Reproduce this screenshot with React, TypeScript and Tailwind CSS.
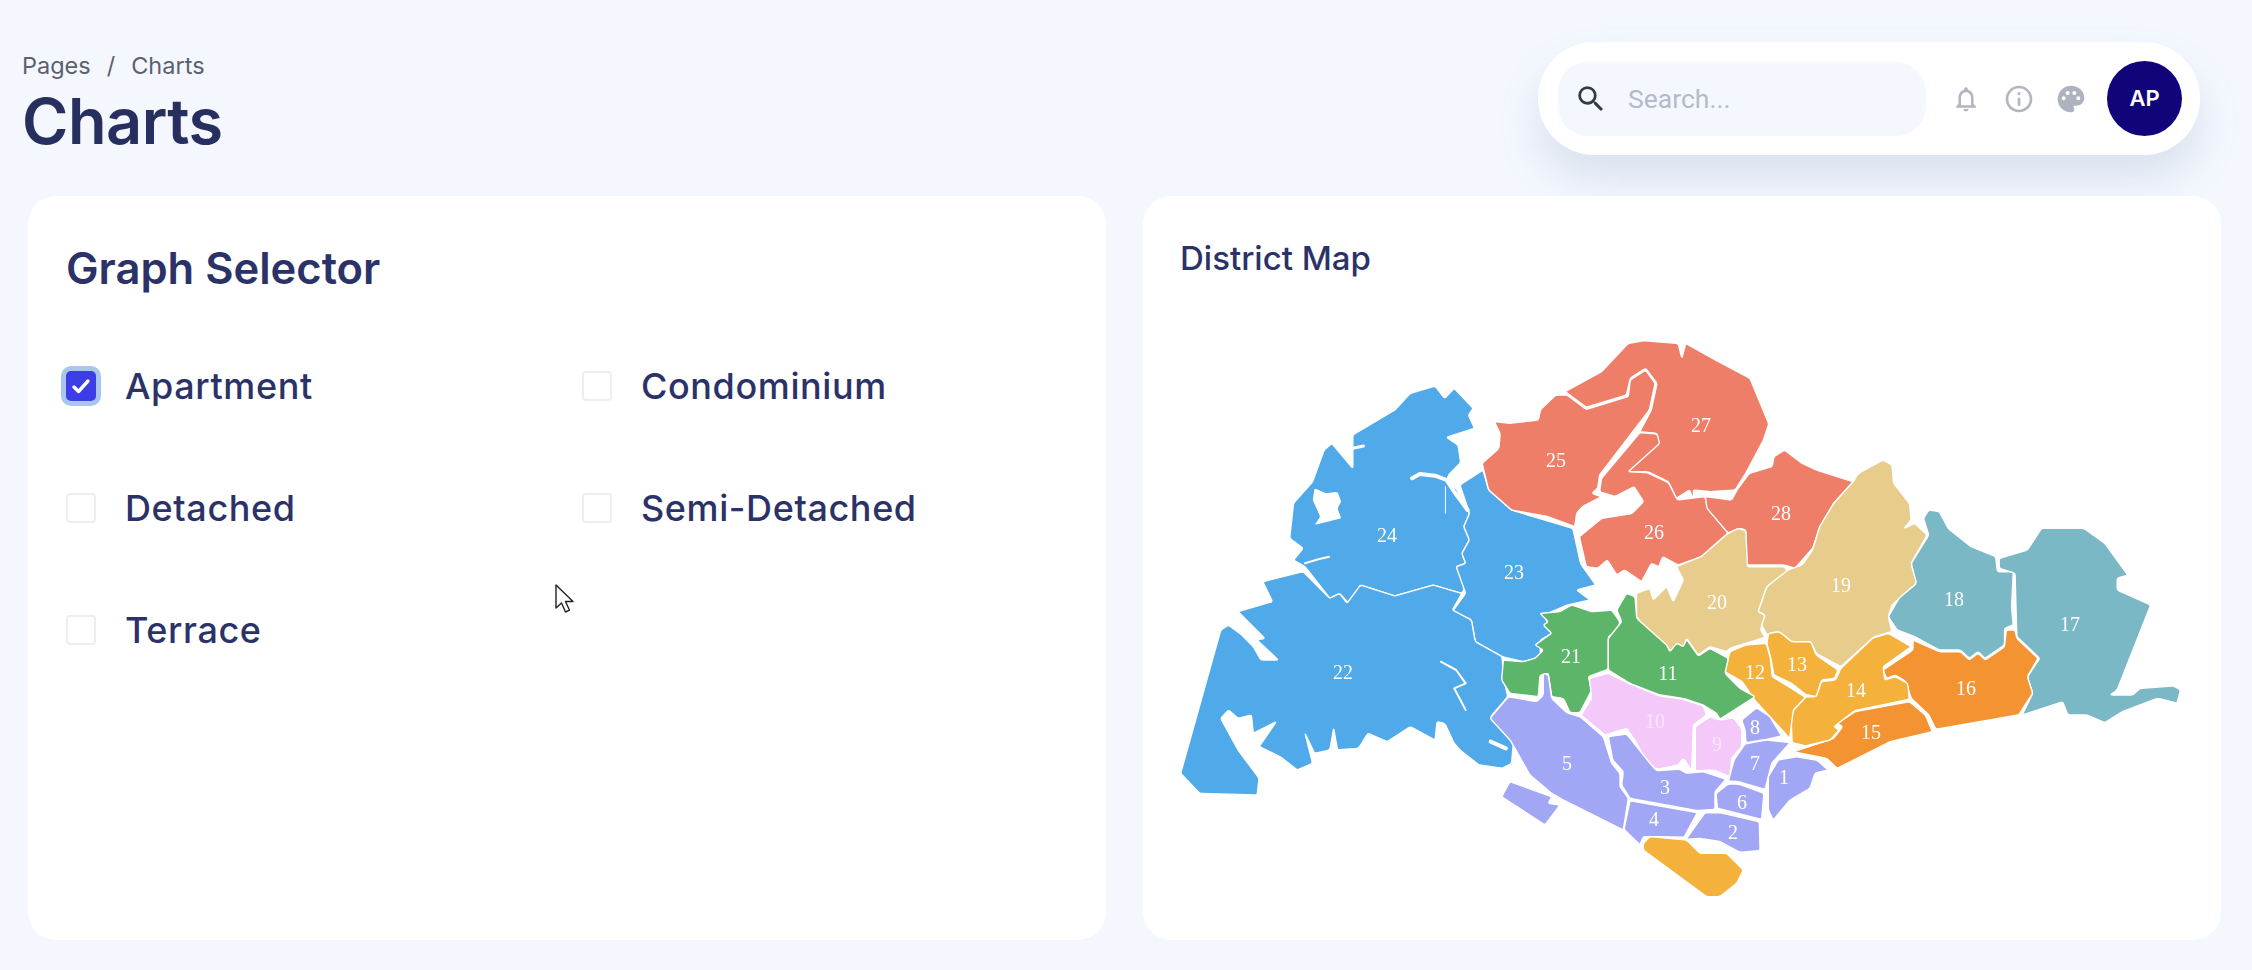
import React from "react";
import { MdSearch, MdNotificationsNone, MdInfoOutline, MdPalette } from "react-icons/md";

type Fn = (x: number, y: number) => [number, number];
const z1: Fn = (x, y) => [1150 + (x * 600) / 1568, 300 + y / 3];
const z3: Fn = (x, y) => [1150 + (x * 600) / 1568, 600 + y / 3];
const z2: Fn = (x, y) => [1700 + (x * 552) / 1568, 440 + y / 3];
const z7: Fn = (x, y) => [1480 + x / 3, 580 + y / 3];

const rounded = (f: Fn, s: string, r = 2) => {
  const n = s.trim().split(/\s+/).map((p) => {
    const [a, b] = p.split(",").map(Number);
    return f(a, b);
  });
  let d = "";
  n.forEach((v, i) => {
    const p = n[(i - 1 + n.length) % n.length];
    const q = n[(i + 1) % n.length];
    const lerp = (o: [number, number]) => {
      const dist = Math.hypot(o[0] - v[0], o[1] - v[1]) || 1;
      const t = Math.min(r / dist, 0.5);
      return [v[0] + (o[0] - v[0]) * t, v[1] + (o[1] - v[1]) * t];
    };
    const a = lerp(p);
    const b = lerp(q);
    d += `${i ? "L" : "M"}${a[0].toFixed(1)} ${a[1].toFixed(1)}Q${v[0].toFixed(1)} ${v[1].toFixed(1)} ${b[0].toFixed(1)} ${b[1].toFixed(1)}`;
  });
  return d + "Z";
};
const line = (f: Fn, s: string) =>
  "M" + s.trim().split(/\s+/).map((p) => {
    const [a, b] = p.split(",").map(Number);
    return f(a, b).map((v) => v.toFixed(1)).join(" ");
  }).join("L");

const BLUE = "#50a9e9", RED = "#ef7e69", TAN = "#e7cc8c", TEAL = "#79b8c4", ORANGE = "#f39331", AMBER = "#f4b13b", GREEN = "#5cb568", PINK = "#f4c8f8", PURPLE = "#a2a7f5";

const regions: [string, Fn, string][] = [
  [BLUE, z1, "745,258 770,295 795,265 845,325 832,345 848,385 775,412 805,435 812,488 780,525 775,545 800,565 835,640 820,680 835,720 815,760 825,790 800,800 830,850 815,880 740,855 640,888 550,855 520,910 495,880 470,895 405,800 375,780 400,745 365,715 375,610 425,545 455,450 475,430 530,505 530,405 640,330 680,280"],
  [BLUE, z1, "870,510 885,570 945,630 1105,685 1125,790 1165,855 1115,870 1150,900 1090,915 1030,945 1050,1000 1020,1020 1020,1070 975,1085 920,1070 850,1025 840,960 790,935 825,880 800,800 825,790 815,760 835,720 820,680 835,640 810,555"],
  [BLUE, z3, "230,35 320,5 295,-55 400,-85 470,-5 495,-20 515,10 550,-45 640,-12 740,-45 815,-20 790,30 840,60 850,125 920,170 925,240 935,290 890,350 950,420 945,490 920,505 860,495 810,450 795,430 770,370 750,365 745,420 680,380 620,425 570,400 545,445 490,450 480,385 470,450 430,460 405,400 425,490 385,510 340,470 285,440 330,365 270,400 265,345 230,355 205,330 185,355 230,450 285,535 280,585 130,580 80,520 185,90 205,75 240,105 270,140 290,180 335,180 280,120 300,115"],
  [RED, z1, "900,365 940,370 1015,360 1020,330 1060,285 1090,285 1140,328 1250,290 1255,240 1295,210 1320,250 1305,330 1175,525 1170,565 1155,580 1180,590 1130,620 1115,640 1110,680 1040,650 945,630 885,570 868,490 912,445 915,400"],
  [RED, z1, "1085,275 1180,215 1250,130 1290,122 1380,130 1390,175 1400,130 1470,175 1568,235 1617,372 1603,420 1557,520 1529,570 1465,575 1420,570 1420,600 1410,570 1375,595 1355,545 1300,515 1250,515 1285,470 1330,430 1325,400 1280,395 1310,330 1325,250 1295,205 1255,235 1245,285 1140,322"],
  [RED, z1, "1280,398 1325,402 1332,430 1250,515 1300,518 1355,548 1378,600 1450,590 1460,630 1510,695 1490,750 1380,795 1340,770 1330,800 1310,790 1285,845 1240,810 1220,825 1195,780 1170,805 1140,800 1122,710 1180,655 1260,640 1290,605 1265,560 1215,590 1175,575 1180,535"],
  [RED, z2, "240,30 290,70 330,90 435,125 380,190 340,260 320,325 270,385 240,375 130,375 130,270 110,265 80,280 20,205 15,170 90,180 105,150 140,100 205,80 210,50"],
  [TAN, z2, "110,265 130,272 135,380 240,380 248,395 190,440 165,515 185,525 172,570 185,592 85,625 76,635 28,620 -5,645 -38,595 -47,620 -66,610 -85,635 -95,615 -151,570 -180,530 -181,460 -142,445 -133,480 -95,440 -76,485 -47,420 -67,380 3,350 79,280"],
  [TAN, z2, "450,100 520,60 545,75 550,130 595,190 600,240 580,265 610,250 645,285 600,370 615,430 545,495 535,530 545,575 495,590 400,680 330,640 315,605 260,610 220,575 190,585 175,555 185,525 165,515 190,440 250,390 290,375 320,330 340,260 380,190 435,125"],
  [TEAL, z2, "650,210 680,215 705,265 770,320 840,350 845,395 890,395 885,500 890,555 865,565 865,615 810,655 790,635 765,655 740,630 680,630 610,590 560,570 535,530 565,475 615,430 600,370 650,285 635,235"],
  [TEAL, z2, "850,355 930,330 970,265 1090,265 1150,310 1215,405 1185,415 1185,450 1280,495 1185,750 1165,765 1230,765 1250,745 1345,738 1365,750 1355,790 1300,775 1200,815 1150,848 1100,825 1045,825 1030,785 915,825 945,760 930,710 965,655 900,590 895,400 850,385"],
  [ORANGE, z2, "605,600 680,635 740,635 765,660 790,640 810,660 865,620 870,570 895,570 900,595 960,655 930,710 945,760 905,825 670,868 650,825 600,775 585,725 555,705 530,715 520,690 605,630"],
  [ORANGE, z2, "595,785 640,825 660,875 540,905 390,985 360,955 265,935 380,895 405,860 390,850 440,815"],
  [AMBER, z2, "520,585 535,580 600,620 520,680 525,720 555,710 590,730 595,778 440,812 380,860 395,870 370,900 300,918 262,908 258,820 300,770 330,770 345,725 385,720 400,685 490,595"],
  [AMBER, z2, "195,580 225,575 260,605 315,605 330,645 392,690 382,715 345,720 330,770 300,764 260,730 210,705 200,650 190,610"],
  [AMBER, z2, "85,635 130,615 188,610 200,655 205,710 260,745 300,772 265,810 255,895 155,780 120,725 70,695 80,655"],
  [GREEN, z7, "180,100 240,95 275,75 335,95 395,90 420,125 410,155 385,170 385,268 325,290 335,330 300,398 270,398 250,355 215,350 205,280 180,285 175,350 90,340 65,300 70,240 130,245 165,235 190,210 165,195 215,160 190,135 205,125"],
  [GREEN, z7, "440,40 465,50 470,115 560,195 570,215 590,190 610,200 620,178 655,228 690,205 745,235 735,280 780,325 825,350 720,418 710,400 670,375 610,355 540,345 450,310 385,270 385,175 425,125 410,90"],
  [PINK, z7, "385,280 450,312 540,348 610,358 670,378 680,405 640,435 635,572 610,535 595,555 530,568 500,545 470,490 440,445 375,465 303,405 335,355 328,295"],
  [PINK, z7, "720,420 760,413 785,445 785,500 755,535 750,590 700,570 646,572 646,440 690,410"],
  [PURPLE, z7, "785,420 830,383 870,410 905,468 850,480 798,488 795,450"],
  [PURPLE, z7, "860,480 930,488 875,550 855,628 775,605 745,603 762,540 795,492"],
  [PURPLE, z7, "895,540 950,530 1010,540 1045,570 1005,580 990,625 930,660 880,720 865,690 865,590"],
  [PURPLE, z7, "745,612 775,612 852,640 845,718 780,702 712,685 708,640"],
  [PURPLE, z7, "675,698 720,698 838,725 840,812 780,817 720,785 660,775 618,778"],
  [PURPLE, z7, "385,470 440,462 510,550 530,572 600,568 620,580 670,575 738,598 705,635 705,688 650,692 450,655 425,615 430,575 398,540"],
  [PURPLE, z7, "450,662 652,698 612,772 540,770 490,770 480,795 432,748"],
  [PURPLE, z7, "85,350 170,365 190,345 190,280 205,285 215,355 260,398 303,412 370,470 395,550 420,580 420,620 445,655 430,750 250,660 215,640 150,585 110,515 90,480 30,415"],
  [PURPLE, z7, "90,605 215,650 205,670 240,675 195,735 65,650"],
  [AMBER, z7, "510,770 620,780 660,820 740,820 790,870 770,910 720,950 680,950 490,810 490,790"],
];

const labels: [string, number, number, string?][] = [
  ["24", 1387, 535], ["23", 1514, 572], ["25", 1556, 460], ["27", 1701, 425], ["26", 1654, 532], ["22", 1343, 672],
  ["21", 1571, 656], ["11", 1668, 673], ["10", 1655, 721, "#fbe6fc"], ["9", 1717, 744, "#fbe6fc"], ["5", 1567, 763], ["3", 1665, 787],
  ["4", 1654, 819], ["2", 1733, 832], ["6", 1742, 802], ["7", 1755, 763], ["1", 1784, 777], ["8", 1755, 727],
  ["20", 1717, 602], ["19", 1841, 585], ["28", 1781, 513], ["18", 1954, 599], ["17", 2070, 624], ["16", 1966, 688],
  ["15", 1871, 732], ["14", 1856, 690], ["13", 1797, 664], ["12", 1755, 672],
];

function DistrictMap() {
  return (
    <svg viewBox="1178 330 1010 580" className="block w-[1010px] h-[580px] ml-[35px] mt-[49px] blur-[0.5px]">
      <g stroke="#ffffff" strokeWidth="1.4" strokeLinejoin="round">
        {regions.map(([c, f, s], i) => (
          <path key={i} d={rounded(f, s)} fill={c} />
        ))}
      </g>
      <path d={rounded(z1, "430,565 425,600 445,650 430,675 500,655 490,625 500,605 490,575 460,580")} fill="#ffffff" />
      <g stroke="#ffffff" fill="none" strokeLinecap="round" strokeLinejoin="round">
        <path d={line(z1, "685,535 705,522 745,527 775,540 795,575 830,630")} strokeWidth="4" />
        <path d={line(z1, "772,560 772,640")} strokeWidth="1" />
        <path d={line(z1, "405,790 440,778 468,770")} strokeWidth="2" />
        <path d={line(z1, "530,445 558,438")} strokeWidth="3" />
        <path d={line(z3, "760,185 800,210 825,250 795,265 825,330")} strokeWidth="2" />
        <path d={line(z3, "890,425 930,445")} strokeWidth="4" />
      </g>
      <g fontFamily="'Liberation Serif', serif" fontSize="20" textAnchor="middle" fill="#ffffff">
        {labels.map(([t, x, y, c]) => (
          <text key={t} x={x} y={y + 7} fill={c || "#ffffff"}>{t}</text>
        ))}
      </g>
    </svg>
  );
}

function Box({ checked, label }: { checked?: boolean; label: string }) {
  return (
    <div className="flex items-center h-[40px]">
      <div className="w-[30px] flex items-center justify-center shrink-0">
        {checked ? (
          <div className="w-[30px] h-[30px] rounded-[5px] bg-[#3d3de8] ring-[5px] ring-[#a9c6f1] flex items-center justify-center">
            <svg viewBox="0 0 24 24" className="w-[24px] h-[24px]" fill="none" stroke="#ffffff" strokeWidth="3.4" strokeLinecap="round" strokeLinejoin="round">
              <path d="M5 13l4.5 4.5L19 7" />
            </svg>
          </div>
        ) : (
          <div className="w-[30px] h-[30px] rounded-[4px] border-2 border-[#eeeef0] bg-white" />
        )}
      </div>
      <span className="ml-[29px] text-[36px] font-medium text-[#2b3268] tracking-[0.6px] leading-none">{label}</span>
    </div>
  );
}

export default function App() {
  return (
    <div className="relative h-[970px] overflow-hidden bg-[#f4f7fe] font-['Inter',sans-serif]">
      <header className="flex items-start justify-between pl-[22px] pr-[52px] pt-[42px]">
        <div className="pt-[7px]">
          <div className="flex text-[23.5px] leading-[34px] text-[#5b606e] font-normal">
            <span>Pages</span>
            <span className="mx-[16px]">/</span>
            <span>Charts</span>
          </div>
          <h1 className="mt-[4px] text-[63px] leading-[68px] font-semibold text-[#272f5f] tracking-[-0.5px]">Charts</h1>
        </div>
        <div className="flex items-center w-[662px] h-[113px] rounded-[56px] bg-white pl-[20px] pr-[18px] shadow-[0_24px_40px_rgba(112,144,176,0.2)]">
          <div className="flex items-center w-[368px] h-[74px] rounded-[30px] bg-[#f4f7fe] pl-[16px]">
            <MdSearch className="text-[#353a45] w-[34px] h-[34px]" />
            <span className="ml-[20px] font-['Roboto',sans-serif] text-[26.5px] text-[#b4bacb]">Search...</span>
          </div>
          <MdNotificationsNone className="ml-[25px] w-[30px] h-[30px] text-[#b3b6bf]" />
          <MdInfoOutline className="ml-[22px] w-[32px] h-[32px] text-[#b3b6bf]" />
          <MdPalette className="ml-[20px] w-[32px] h-[32px] text-[#aeb2bf]" />
          <div className="ml-[20px] w-[75px] h-[75px] rounded-full bg-[#11047a] flex items-center justify-center text-white text-[22px] font-semibold">AP</div>
        </div>
      </header>
      <main className="mt-[41px] ml-[28px] grid grid-cols-[1078px_1078px] gap-x-[37px]">
        <section className="h-[744px] rounded-[28px] bg-white pl-[38px] pt-[42px]">
          <h2 className="text-[43.5px] leading-[60px] font-semibold text-[#2b3268]">Graph Selector</h2>
          <div className="mt-[68px] grid grid-cols-[516px_1fr] gap-y-[82px]">
            <Box checked label="Apartment" />
            <Box label="Condominium" />
            <Box label="Detached" />
            <Box label="Semi-Detached" />
            <Box label="Terrace" />
          </div>
        </section>
        <section className="h-[744px] rounded-[28px] bg-white">
          <h2 className="pl-[37px] pt-[39px] text-[33px] leading-[46px] font-medium text-[#2b3268]">District Map</h2>
          <DistrictMap />
        </section>
      </main>
      <svg viewBox="0 0 20 30" className="absolute left-[555px] top-[584px] w-[20px] h-[30px]" fill="#ffffff" stroke="#222222" strokeWidth="1.4" strokeLinejoin="round">
        <path d="M1 1v23l5.5-5 4 9 4-1.8-4-8.7H18z" />
      </svg>
    </div>
  );
}
